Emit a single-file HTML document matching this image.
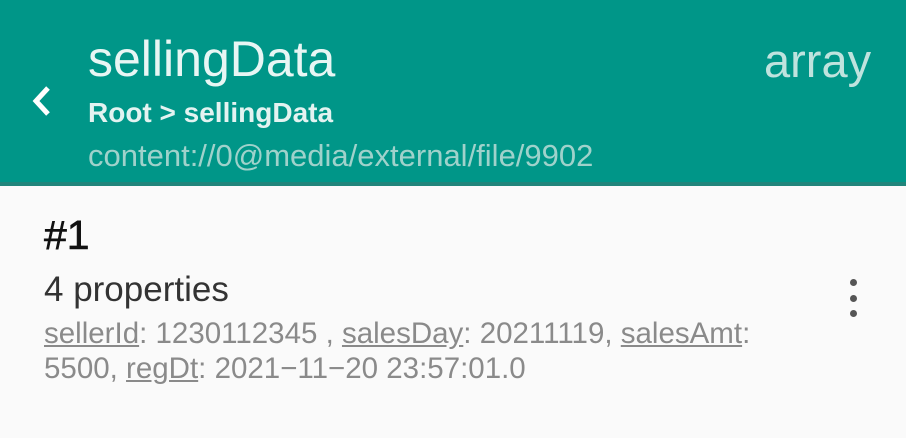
<!DOCTYPE html>
<html><head><meta charset="utf-8"><style>
*{margin:0;padding:0}
body{width:906px;height:438px;overflow:hidden;background:#fafafa;font-family:"Liberation Sans",sans-serif;position:relative}
.hd{position:absolute;left:0;top:0;width:906px;height:183px;background:#009688}
.sh{position:absolute;left:0;top:182px;width:906px;height:4px;background:#20857b}
.t{position:absolute;white-space:nowrap;transform-origin:left top;display:inline-block}
</style></head><body>
<div class="hd"></div><div class="sh"></div>
<svg style="position:absolute;left:28px;top:84px" width="28" height="34" viewBox="0 0 28 34"><path d="M20 4 L8 17 L20 30" fill="none" stroke="#fff" stroke-width="5"/></svg>
<div class="t" style="left:88px;top:30px;font-size:50px;color:#e8f6f4">sellingData</div>
<div class="t" style="left:764px;top:33px;font-size:47px;color:#bfe3de">array</div>
<div class="t" style="left:88px;top:97px;font-size:28px;font-weight:bold;color:#e3f3f1">Root &gt; sellingData</div>
<div class="t" style="left:88px;top:138px;font-size:31px;color:#9fd2cb">content://0@media/external/file/9902</div>
<div class="t" style="left:44px;top:212px;font-size:41px;color:#111;-webkit-text-stroke:0.6px #111">#1</div>
<div class="t" style="left:44px;top:270px;font-size:35px;color:#333">4 properties</div>
<div class="t" style="left:44px;top:317px;font-size:29.5px;color:#8a8a8a"><u>sellerId</u>: 1230112345 , <u>salesDay</u>: 20211119, <u>salesAmt</u>:</div>
<div class="t" style="left:44px;top:352px;font-size:29.5px;color:#8a8a8a">5500, <u>regDt</u>: 2021−11−20 23:57:01.0</div>
<div style="position:absolute;left:850px;top:279px;width:7px;height:7px;border-radius:50%;background:#555"></div>
<div style="position:absolute;left:850px;top:295px;width:7px;height:7px;border-radius:50%;background:#555"></div>
<div style="position:absolute;left:850px;top:310px;width:7px;height:7px;border-radius:50%;background:#555"></div>
</body></html>
